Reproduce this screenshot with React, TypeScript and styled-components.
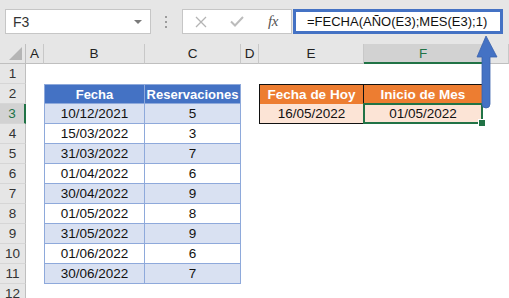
import React from "react";
import styled, { createGlobalStyle, css } from "styled-components";

const GlobalStyle = createGlobalStyle`
  html, body { margin: 0; padding: 0; background: #ffffff; overflow: hidden; }
  body { font-family: "Liberation Sans", Arial, sans-serif; }
  * { box-sizing: border-box; }
`;

const Frame = styled.div`
  position: relative;
  width: 509px;
  height: 298px;
  overflow: hidden;
  background: #ffffff;
`;

const FormulaBar = styled.div`
  display: flex;
  align-items: flex-start;
  height: 44px;
  padding: 9px 6px 0 5px;
  background: #e6e6e6;
`;

const NameBox = styled.div`
  display: flex;
  align-items: center;
  justify-content: space-between;
  width: 146px;
  height: 25px;
  padding: 0 8px 0 7px;
  background: #ffffff;
  border: 1px solid #c6c6c6;
  font-size: 14px;
  color: #333333;
`;

const Caret = styled.span`
  width: 0;
  height: 0;
  border-left: 4px solid transparent;
  border-right: 4px solid transparent;
  border-top: 4px solid #7a7a7a;
`;

const Grip = styled.div`
  display: flex;
  justify-content: center;
  align-items: center;
  width: 31px;
  height: 25px;
`;

const FuncBox = styled.div`
  display: flex;
  align-items: center;
  width: 110px;
  height: 25px;
  background: #ffffff;
  border: 1px solid #c6c6c6;
`;

const FuncSlot = styled.div`
  display: flex;
  align-items: center;
  justify-content: center;
  width: 36px;
  height: 100%;
`;

const Fx = styled.span`
  font-family: "Liberation Serif", "Times New Roman", serif;
  font-style: italic;
  font-size: 15px;
  color: #555555;
  letter-spacing: -0.5px;
`;

const FormulaInput = styled.div`
  flex: 1;
  display: flex;
  align-items: center;
  height: 25px;
  margin-left: 1px;
  padding-left: 11px;
  background: #ffffff;
  border: 3px solid #4472c4;
  font-size: 13px;
  color: #111111;
  white-space: nowrap;
`;

const Sheet = styled.div`
  display: grid;
  grid-template-columns: 26px 18px 101px 96px 18px 105px 119px 1fr;
  grid-auto-rows: 20px;
  font-size: 13.5px;
  color: #111111;
`;

const headerBase = css`
  display: flex;
  align-items: center;
  justify-content: center;
  background: #e6e6e6;
  color: #222222;
  font-size: 13.5px;
`;

const Corner = styled.div`
  ${headerBase};
  position: relative;
  border-right: 1px solid #bfbfbf;
  border-bottom: 1px solid #bfbfbf;
  &::after {
    content: "";
    position: absolute;
    right: 3px;
    bottom: 3px;
    width: 0;
    height: 0;
    border-left: 13px solid transparent;
    border-bottom: 13px solid #b5b5b5;
  }
`;

const ColHeader = styled.div<{ $active?: boolean }>`
  ${headerBase};
  border-right: 1px solid #c8c8c8;
  border-bottom: ${(p) => (p.$active ? "2px solid #217346" : "1px solid #bfbfbf")};
  ${(p) =>
    p.$active &&
    css`
      background: #d2d2d2;
      color: #217346;
    `}
`;

const RowHeader = styled.div<{ $active?: boolean }>`
  ${headerBase};
  border-right: ${(p) => (p.$active ? "2px solid #217346" : "1px solid #bfbfbf")};
  border-bottom: 1px solid #d6d6d6;
  color: #333333;
  ${(p) =>
    p.$active &&
    css`
      background: #d2d2d2;
      color: #217346;
    `}
`;

const Blank = styled.div``;

const BlueHead = styled.div<{ $first?: boolean }>`
  display: flex;
  align-items: center;
  justify-content: center;
  background: #4472c4;
  color: #ffffff;
  font-weight: bold;
  font-size: 13px;
  border-top: 1px solid #8ea9db;
  border-right: 1px solid #8ea9db;
  border-bottom: 1px solid #8ea9db;
  ${(p) => p.$first && css`border-left: 1px solid #8ea9db;`}
`;

const BlueCell = styled.div<{ $band?: boolean; $first?: boolean }>`
  display: flex;
  align-items: center;
  justify-content: center;
  background: ${(p) => (p.$band ? "#d9e1f2" : "#ffffff")};
  border-right: 1px solid #8ea9db;
  border-bottom: 1px solid #8ea9db;
  ${(p) => p.$first && css`border-left: 1px solid #8ea9db;`}
`;

const OrangeHead = styled.div<{ $first?: boolean }>`
  display: flex;
  align-items: center;
  justify-content: center;
  background: #ed7d31;
  color: #ffffff;
  font-weight: bold;
  font-size: 13.5px;
  border-top: 1px solid #111111;
  border-right: 1px solid #111111;
  ${(p) => p.$first && css`border-left: 1px solid #111111;`}
`;

const PeachCell = styled.div<{ $first?: boolean; $selected?: boolean }>`
  position: relative;
  display: flex;
  align-items: center;
  justify-content: center;
  background: #fce4d6;
  border-right: 1px solid #111111;
  border-bottom: 1px solid #111111;
  ${(p) => p.$first && css`border-left: 1px solid #111111;`}
  ${(p) =>
    p.$selected &&
    css`
      &::after {
        content: "";
        position: absolute;
        left: -1px;
        top: -1px;
        right: -1px;
        bottom: -1px;
        border: 2px solid #217346;
      }
      &::before {
        content: "";
        position: absolute;
        right: -4px;
        bottom: -4px;
        width: 6px;
        height: 6px;
        background: #217346;
        border: 1px solid #ffffff;
        z-index: 2;
      }
    `}
`;

const Arrow = styled.svg`
  position: absolute;
  left: 476px;
  top: 34px;
`;

const cols = ["A", "B", "C", "D", "E", "F", ""];

const data: [string, number][] = [
  ["10/12/2021", 5],
  ["15/03/2022", 3],
  ["31/03/2022", 7],
  ["01/04/2022", 6],
  ["30/04/2022", 9],
  ["01/05/2022", 8],
  ["31/05/2022", 9],
  ["01/06/2022", 6],
  ["30/06/2022", 7],
];

export default function App() {
  const rows: React.ReactNode[] = [];

  // Row 1
  rows.push(<RowHeader key="r1">1</RowHeader>);
  for (let c = 0; c < 7; c++) rows.push(<Blank key={`r1c${c}`} />);

  // Row 2
  rows.push(<RowHeader key="r2">2</RowHeader>);
  rows.push(<Blank key="r2a" />);
  rows.push(<BlueHead key="r2b" $first>Fecha</BlueHead>);
  rows.push(<BlueHead key="r2c">Reservaciones</BlueHead>);
  rows.push(<Blank key="r2d" />);
  rows.push(<OrangeHead key="r2e" $first>Fecha de Hoy</OrangeHead>);
  rows.push(<OrangeHead key="r2f">Inicio de Mes</OrangeHead>);
  rows.push(<Blank key="r2g" />);

  data.forEach(([date, n], i) => {
    const r = i + 3;
    const band = i % 2 === 0;
    rows.push(
      <RowHeader key={`r${r}`} $active={r === 3}>
        {r}
      </RowHeader>
    );
    rows.push(<Blank key={`r${r}a`} />);
    rows.push(
      <BlueCell key={`r${r}b`} $band={band} $first>
        {date}
      </BlueCell>
    );
    rows.push(
      <BlueCell key={`r${r}c`} $band={band}>
        {n}
      </BlueCell>
    );
    rows.push(<Blank key={`r${r}d`} />);
    if (r === 3) {
      rows.push(
        <PeachCell key="r3e" $first>
          16/05/2022
        </PeachCell>
      );
      rows.push(
        <PeachCell key="r3f" $selected>
          01/05/2022
        </PeachCell>
      );
    } else {
      rows.push(<Blank key={`r${r}e`} />);
      rows.push(<Blank key={`r${r}f`} />);
    }
    rows.push(<Blank key={`r${r}g`} />);
  });

  rows.push(<RowHeader key="r12">12</RowHeader>);

  return (
    <>
      <GlobalStyle />
      <Frame>
        <FormulaBar>
          <NameBox>
            <span>F3</span>
            <Caret />
          </NameBox>
          <Grip>
            <svg width="3" height="14" viewBox="0 0 3 14">
              <rect x="0" y="1" width="2" height="2" fill="#9c9c9c" />
              <rect x="0" y="6" width="2" height="2" fill="#9c9c9c" />
              <rect x="0" y="11" width="2" height="2" fill="#9c9c9c" />
            </svg>
          </Grip>
          <FuncBox>
            <FuncSlot>
              <svg width="12" height="12" viewBox="0 0 12 12">
                <path d="M1 1 L11 11 M11 1 L1 11" stroke="#b4b4b4" strokeWidth="1.3" fill="none" />
              </svg>
            </FuncSlot>
            <FuncSlot>
              <svg width="14" height="11" viewBox="0 0 14 11">
                <path d="M1 5.5 L5 9.5 L13 1" stroke="#bcbcbc" strokeWidth="2" fill="none" />
              </svg>
            </FuncSlot>
            <FuncSlot>
              <Fx>fx</Fx>
            </FuncSlot>
          </FuncBox>
          <FormulaInput>=FECHA(AÑO(E3);MES(E3);1)</FormulaInput>
        </FormulaBar>
        <Sheet>
          <Corner />
          {cols.map((c) => (
            <ColHeader key={c || "g"} $active={c === "F"}>
              {c}
            </ColHeader>
          ))}
          {rows}
        </Sheet>
        <Arrow width="22" height="76" viewBox="0 0 22 76">
          <path
            d="M10 2 L1 23 L6 23 L6 70 A4 4 0 0 0 14 70 L14 23 L21 23 Z"
            fill="#4472c4"
            stroke="#3a62ad"
            strokeWidth="0.8"
            strokeLinejoin="round"
          />
        </Arrow>
      </Frame>
    </>
  );
}
